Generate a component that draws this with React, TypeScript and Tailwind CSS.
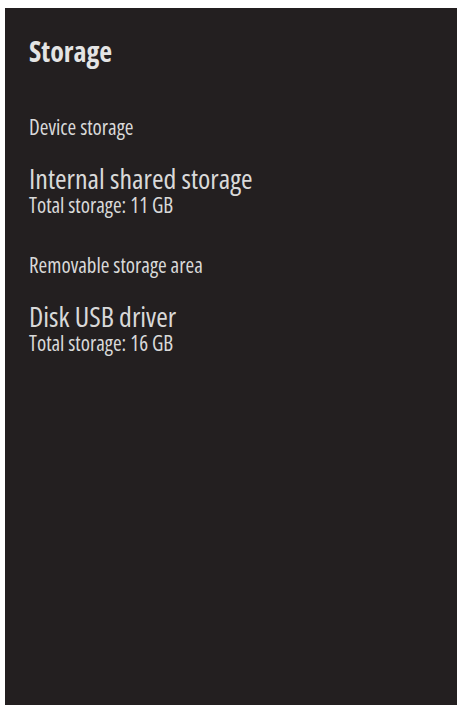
export default function App() {
  return (
    <div className="min-h-screen bg-white pt-[8px] pl-[5px]">
      <div className="w-[452px] h-[697px] bg-[#231f20] pl-[24px] pt-[29px] font-['Open_Sans',sans-serif] [font-stretch:condensed] text-[#d9d9d9]">
        <h1 className="text-[28px] leading-none font-bold text-[#e4e4e4]">Storage</h1>

        <div className="mt-[52px] text-[21px] leading-none">Device storage</div>
        <div className="mt-[26px] text-[28px] leading-none">Internal shared storage</div>
        <div className="mt-[3px] text-[21px] leading-none">Total storage: 11 GB</div>

        <div className="mt-[39px] text-[21px] leading-none">Removable storage area</div>
        <div className="mt-[26px] text-[28px] leading-none">Disk USB driver</div>
        <div className="mt-[3px] text-[21px] leading-none">Total storage: 16 GB</div>
      </div>
    </div>
  );
}
